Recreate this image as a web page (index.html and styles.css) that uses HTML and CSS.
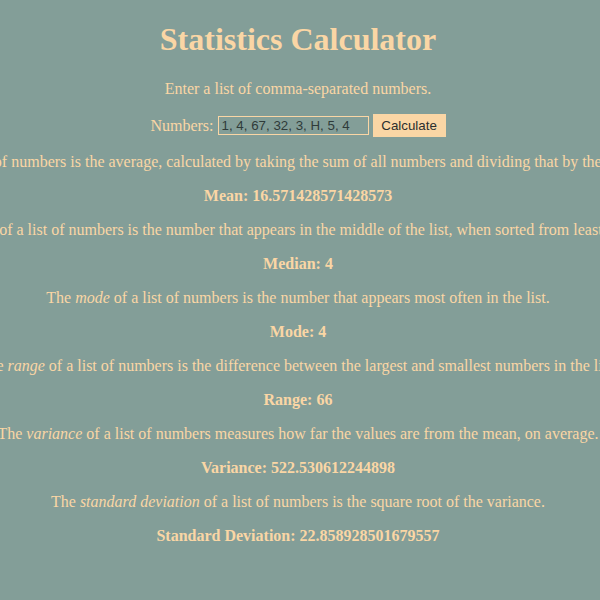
FILE: index.html
```html
<!DOCTYPE html>
<html>
<head>
<meta charset="utf-8">
<title>Statistics Calculator</title>
<link rel="stylesheet" href="styles.css">
</head>
<body>
<main class="page">
  <h1 class="title">Statistics Calculator</h1>
  <p class="line">Enter a list of comma-separated numbers.</p>
  <p class="line form-row">
    <label class="label" for="nums">Numbers:</label>
    <input class="field" id="nums" type="text" value="1, 4, 67, 32, 3, H, 5, 4">
    <button class="btn" type="button">Calculate</button>
  </p>
  <p class="line">The <em>mean</em> of a list of numbers is the average, calculated by taking the sum of all numbers and dividing that by the count of numbers.</p>
  <p class="line result">Mean: 16.571428571428573</p>
  <p class="line">The <em>median</em> of a list of numbers is the number that appears in the middle of the list, when sorted from least to greatest.</p>
  <p class="line result">Median: 4</p>
  <p class="line">The <em>mode</em> of a list of numbers is the number that appears most often in the list.</p>
  <p class="line result">Mode: 4</p>
  <p class="line">The <em>range</em> of a list of numbers is the difference between the largest and smallest numbers in the list.</p>
  <p class="line result">Range: 66</p>
  <p class="line">The <em>variance</em> of a list of numbers measures how far the values are from the mean, on average.</p>
  <p class="line result">Variance: 522.530612244898</p>
  <p class="line">The <em>standard deviation</em> of a list of numbers is the square root of the variance.</p>
  <p class="line result">Standard Deviation: 22.858928501679557</p>
</main>
</body>
</html>
```
FILE: styles.css
```css
html {
  background: #839e98;
  overflow: hidden;
}
body {
  margin: 0;
  padding: 21px 10px 8px 6px;
  font-family: "Liberation Serif", "Times New Roman", serif;
  font-size: 16px;
  color: #fad6a5;
}
.page {
  display: flex;
  flex-direction: column;
  align-items: center;
  gap: 16px;
}
.title {
  font-size: 32px;
  font-weight: bold;
  line-height: 37px;
  margin: 0 0 6px;
  white-space: nowrap;
}
.line {
  margin: 0;
  line-height: 18px;
  white-space: nowrap;
  text-align: center;
}
.result {
  font-weight: bold;
}
.form-row {
  display: flex;
  align-items: center;
  height: 23px;
}
.label {
  margin-right: 4px;
}
.field {
  box-sizing: border-box;
  width: 151px;
  height: 19px;
  margin: 0 4px 0 0;
  padding: 1px 3px;
  border: 1px solid #fad6a5;
  background: transparent;
  color: #2f3b3a;
  font-family: "Liberation Sans", Arial, sans-serif;
  font-size: 13.33px;
  outline: none;
}
.btn {
  box-sizing: border-box;
  width: 73px;
  height: 23px;
  padding: 0;
  border: none;
  background: #fad6a5;
  color: #2b2f2f;
  font-family: "Liberation Sans", Arial, sans-serif;
  font-size: 13.33px;
}
```
